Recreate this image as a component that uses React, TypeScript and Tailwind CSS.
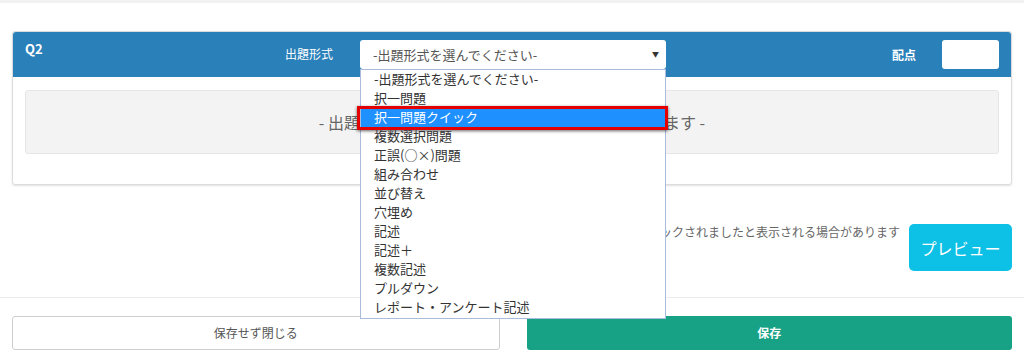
import { useState } from "react";

const FORMAT_OPTIONS = [
  "-出題形式を選んでください-",
  "択一問題",
  "択一問題クイック",
  "複数選択問題",
  "正誤(○×)問題",
  "組み合わせ",
  "並び替え",
  "穴埋め",
  "記述",
  "記述＋",
  "複数記述",
  "プルダウン",
  "レポート・アンケート記述",
];

export default function App() {
  const [selected] = useState(2);

  return (
    <div
      className="relative h-[362px] w-[1024px] overflow-hidden bg-white text-[#333]"
      style={{ fontFamily: '"Noto Sans CJK JP", "Noto Sans", sans-serif' }}
    >
      <div className="h-[3px] bg-[#f2f2f2]" />

      <div className="px-3 pt-[28px]">
        <div className="rounded-[3px] border border-[#dcdcdc] shadow-[0_1px_2px_rgba(0,0,0,0.12)]">
          <div className="flex h-[45px] items-start rounded-t-[3px] bg-[#2a80b9] px-3 pt-[8px] text-white">
            <div className="w-[260px] text-[13px] font-bold leading-[18px]">Q2</div>
            <div className="mt-[5px] mr-[27px] w-[48px] text-[12px] leading-[18px]">出題形式</div>

            <div className="relative">
              <div className="flex h-[29px] w-[306px] items-center justify-between rounded-[3px] bg-white pl-[13px] pr-[7px] text-[13px] text-[#555]">
                <span>-出題形式を選んでください-</span>
                <span className="text-[7px] text-[#333]">▼</span>
              </div>

              <ul className="absolute left-0 top-[29px] z-10 w-[306px] border border-[#a9bcdc] bg-white pb-[1px] text-[13px] text-[#333]">
                {FORMAT_OPTIONS.map((option, index) => (
                  <li
                    key={option}
                    className={`relative h-[19px] pl-[13px] leading-[17px] ${index === selected ? "bg-[#1e90ff] text-white" : ""}`}
                  >
                    {option}
                    {index === selected && (
                      <span className="pointer-events-none absolute -left-[4px] -right-[3px] -top-[2px] -bottom-[3px] border-[3px] border-[#e40000] shadow-[0_1px_3px_rgba(0,0,0,0.6)]" />
                    )}
                  </li>
                ))}
              </ul>
            </div>

            <div className="flex-1" />
            <div className="mt-[6px] mr-[26px] text-[12px] font-bold leading-[18px]">配点</div>
            <div className="h-[29px] w-[57px] rounded-[3px] bg-white" />
          </div>

          <div className="px-3 pb-[30px] pt-[13px]">
            <div className="flex h-[64px] items-center justify-center rounded-[3px] border border-[#e6e6e6] bg-[#f3f3f3] text-[16px] text-[#666]">
              - 出題形式を選択すると問題作成画面が表示されます -
            </div>
          </div>
        </div>

        <div className="mt-[39px] flex items-start justify-end">
          <p className="mr-[9px] mt-[-1px] text-[12px] leading-[18px] text-[#666]">
            ※プレビュー時にポップアップがブロックされましたと表示される場合があります
          </p>
          <button
            type="button"
            className="h-[47px] w-[103px] rounded-[5px] bg-[#0dc0e5] text-[16px] text-white"
          >
            プレビュー
          </button>
        </div>
      </div>

      <div className="mt-[26px] h-px bg-[#ececec]" />

      <div className="flex gap-[27px] px-3 pt-[18px]">
        <button
          type="button"
          className="h-[34px] flex-1 rounded-[3px] border border-[#cfcfcf] bg-white text-[12px] text-[#555]"
        >
          保存せず閉じる
        </button>
        <button
          type="button"
          className="h-[34px] flex-1 rounded-[3px] bg-[#17a185] text-[12px] font-bold text-white"
        >
          保存
        </button>
      </div>
    </div>
  );
}
